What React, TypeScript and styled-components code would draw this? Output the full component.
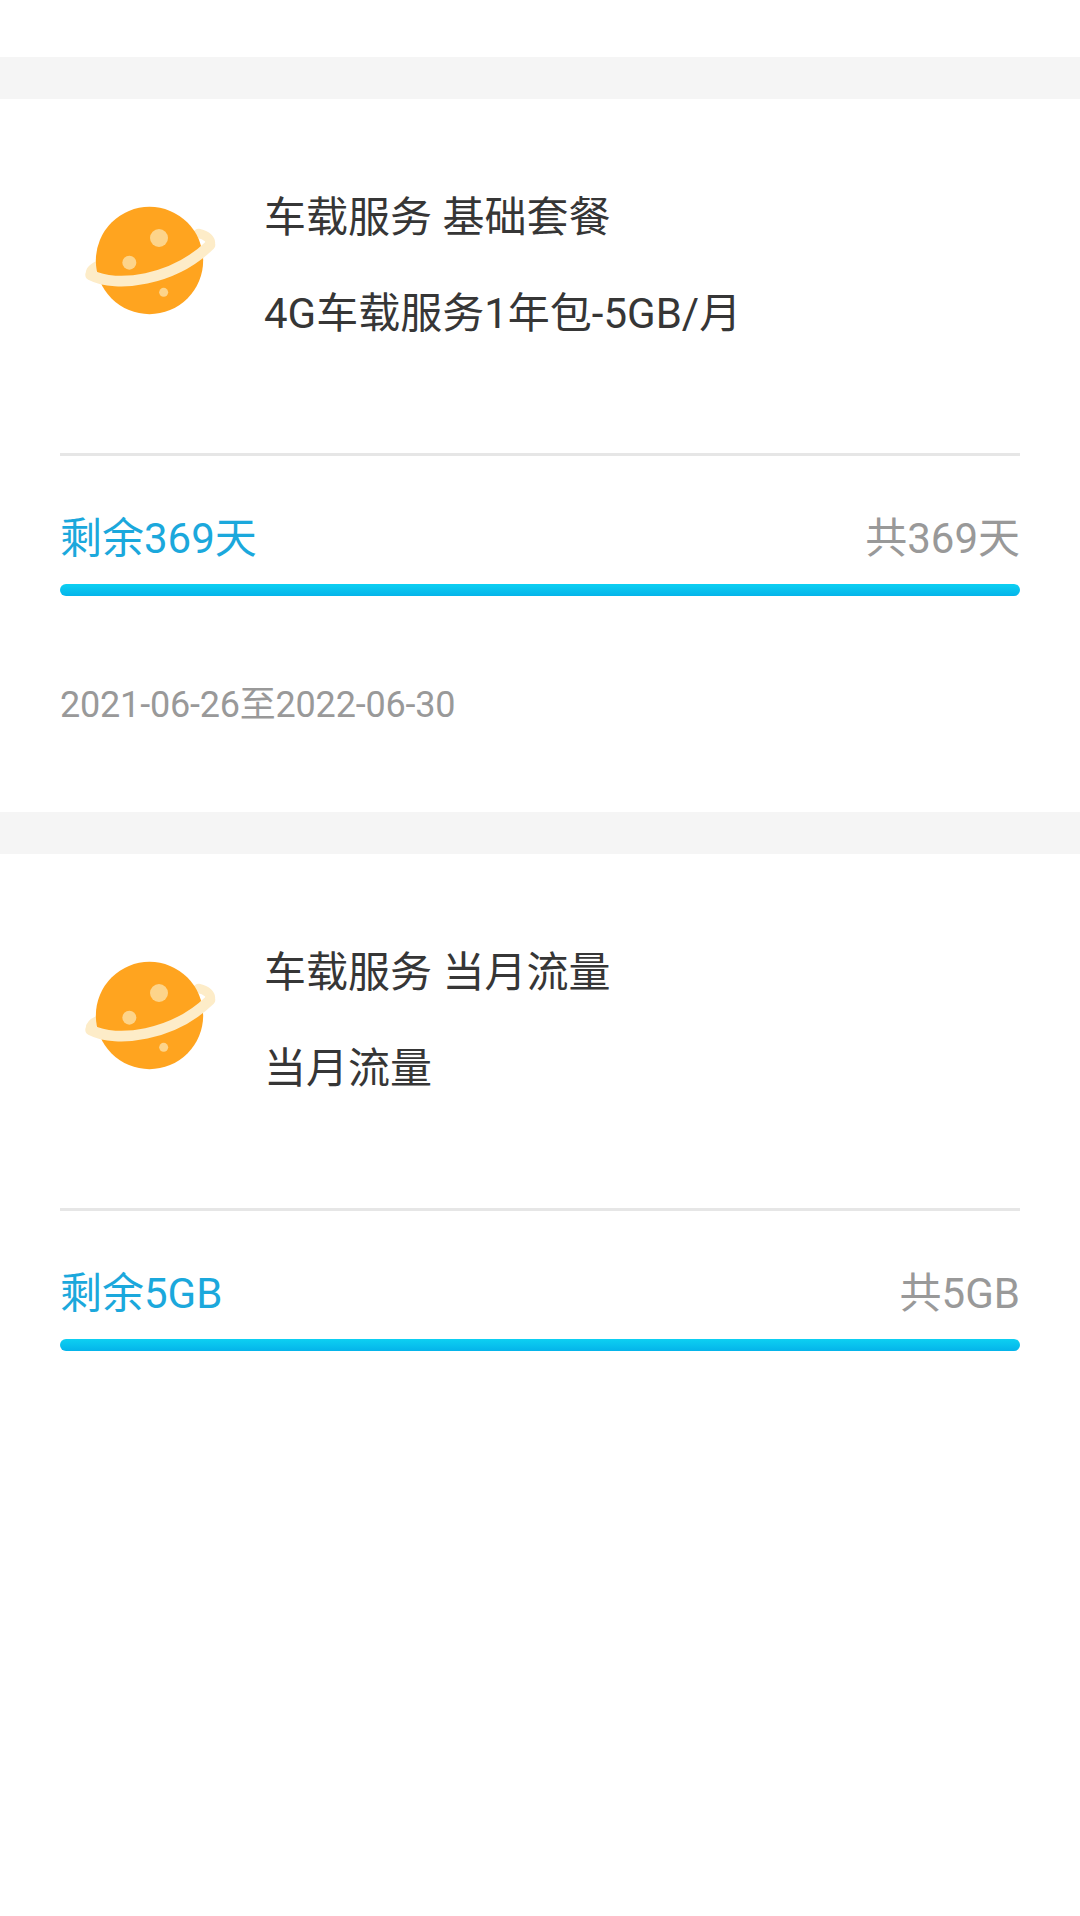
import React from "react";
import styled, { createGlobalStyle } from "styled-components";

const GlobalStyle = createGlobalStyle`
  html, body {
    margin: 0;
    padding: 0;
    background: #fff;
  }
  body {
    font-family: Roboto, "Noto Sans CJK SC", sans-serif;
  }
`;

const Page = styled.div`
  width: 1080px;
  height: 1916px;
  overflow: hidden;
  padding-top: 57px;
  box-sizing: border-box;
  background: #fff;
`;

const Band = styled.div`
  height: 42px;
  background: #f5f5f5;
`;

const Card = styled.div<{ $height: number }>`
  height: ${(p) => p.$height}px;
  padding: 0 60px;
  box-sizing: border-box;
`;

const Head = styled.div`
  display: flex;
  height: 357px;
  border-bottom: 3px solid #e6e6e6;
  box-sizing: border-box;
`;

const IconWrap = styled.div`
  width: 204px;
  padding: 101px 0 0 20px;
  box-sizing: border-box;
  flex-shrink: 0;
`;

const Lines = styled.div`
  padding-top: 90px;
  display: flex;
  flex-direction: column;
  gap: 38px;
`;

const Line = styled.div`
  font-size: 42px;
  line-height: 58px;
  color: #363636;
  white-space: pre;
`;

const Usage = styled.div`
  display: flex;
  justify-content: space-between;
  align-items: center;
  height: 58px;
  margin-top: 54px;
  font-size: 42px;
  line-height: 58px;
`;

const Left = styled.span`
  color: #1ba8dc;
`;

const Total = styled.span`
  color: #999;
`;

const Bar = styled.div`
  height: 12px;
  margin-top: 16px;
  border-radius: 6px;
  background: linear-gradient(#0dd0f2, #04b4ea);
`;

const Dates = styled.div`
  margin-top: 84px;
  font-size: 36px;
  line-height: 50px;
  letter-spacing: -0.2px;
  color: #999;
`;

const Planet = () => (
  <svg width="140" height="120" viewBox="60 60 420 360">
    <path
      d="M92 285C88 270 105 258 130 250M450 195C456 180 440 165 415 160"
      fill="none"
      stroke="#fdecc8"
      strokeWidth="28"
      strokeLinecap="round"
    />
    <circle cx="268.5" cy="241.5" r="161" fill="#ffa41f" />
    <circle cx="297" cy="174" r="27" fill="#fdd48a" />
    <circle cx="208" cy="248" r="21" fill="#fdd48a" />
    <circle cx="311" cy="337" r="13.5" fill="#fdd48a" />
    <path
      d="M92 285C170 325 340 302 450 195"
      fill="none"
      stroke="#fdecc8"
      strokeWidth="32"
      strokeLinecap="round"
    />
  </svg>
);

interface IPlan {
  title: string;
  name: string;
  left: string;
  total: string;
  dates?: string;
  height: number;
}

const plans: IPlan[] = [
  {
    title: "车载服务 基础套餐",
    name: "4G车载服务1年包-5GB/月",
    left: "剩余369天",
    total: "共369天",
    dates: "2021-06-26至2022-06-30",
    height: 713,
  },
  {
    title: "车载服务 当月流量",
    name: "当月流量",
    left: "剩余5GB",
    total: "共5GB",
    height: 1005,
  },
];

const App = () => (
  <Page>
    <GlobalStyle />
    {plans.map((plan) => (
      <div key={plan.title}>
        <Band />
        <Card $height={plan.height}>
          <Head>
            <IconWrap>
              <Planet />
            </IconWrap>
            <Lines>
              <Line>{plan.title}</Line>
              <Line>{plan.name}</Line>
            </Lines>
          </Head>
          <Usage>
            <Left>{plan.left}</Left>
            <Total>{plan.total}</Total>
          </Usage>
          <Bar />
          {plan.dates && <Dates>{plan.dates}</Dates>}
        </Card>
      </div>
    ))}
  </Page>
);

export default App;
